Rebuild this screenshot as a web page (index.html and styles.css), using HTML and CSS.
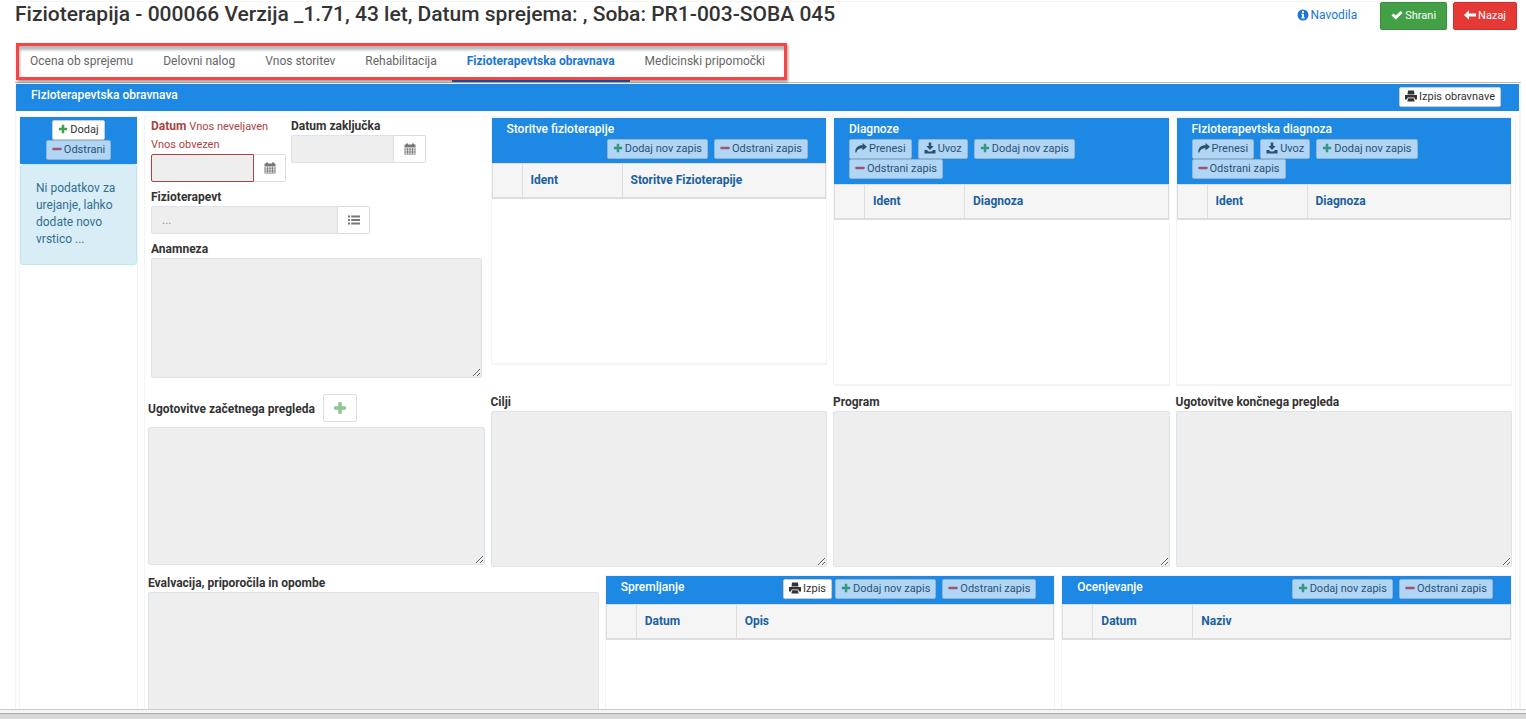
FILE: index.html
```html
<!DOCTYPE html>
<html lang="sl">
<head>
  <meta charset="utf-8">
  <title>Fizioterapija</title>
  <link rel="stylesheet" href="styles.css">
</head>
<body>

    <!-- icons -->
    <svg class="sprite" aria-hidden="true">
        <symbol id="plus" viewBox="0 0 12 12"><path d="M4.5 1h3v3.500h3.500v3H7.500V11h-3V7.500H1v-3h3.500z"/></symbol>
        <symbol id="minus" viewBox="0 0 12 12"><rect x="0.500" y="4.500" width="11" height="3" rx="0.500"/></symbol>
        <symbol id="share" viewBox="0 0 12 12"><path d="M7.500 1L12 4.800 7.500 8.600V6.300C4.500 6.200 2.200 7.200 1.300 10.500L0.300 10.500C0 6 2.800 3.300 7.500 3.300z"/></symbol>
        <symbol id="download" viewBox="0 0 12 12"><path d="M4.700 0.500h2.600v3.500h2.400L6 8 2.300 4h2.400zM0.500 8h2.500l1.500 1.500h3L9 8h2.500v3.500h-11z"/></symbol>
        <symbol id="print" viewBox="0 0 12 12"><path d="M3 0.500h6l0.500 4h-7zM0 5h12v4.500h-2l-0.700-2H2.700L2 9.500H0zM3.300 8.200h5.400l1 3.300H2.300z"/></symbol>
        <symbol id="ok" viewBox="0 0 12 12"><path d="M0.500 6.500L2.500 4.500 4.800 6.500 9.700 2 11.600 3.900 4.800 10.500z"/></symbol>
        <symbol id="left" viewBox="0 0 12 12"><path d="M0 6L5 1.200V4.500h7v3H5v3.300z"/></symbol>
        <symbol id="info" viewBox="0 0 12 12"><path fill-rule="evenodd" d="M6 0.500a5.500 5.500 0 1 0 0 11a5.500 5.500 0 1 0 0-11zM5 2h2v1.800H5zM4.300 4.800H7v3.500h0.800v1.200H4.300V8.300H5V6H4.300z"/></symbol>
        <symbol id="calendar" viewBox="0 0 12 12"><path fill-rule="evenodd" d="M0.500 1.500H2V0.500h2v1h4v-1h2v1h1.500V4h-11zM0.500 4.500h11v7h-11zM1.300 5.200v1.300h1.700V5.200zM3.800 5.200v1.300h1.800V5.200zM6.400 5.200v1.300h1.800V5.200zM9 5.200v1.300h1.700V5.200zM1.300 7.300v1.300h1.700V7.300zM3.800 7.300v1.300h1.800V7.300zM6.400 7.300v1.300h1.800V7.300zM9 7.300v1.300h1.700V7.300zM1.300 9.400v1.300h1.700V9.400zM3.800 9.400v1.300h1.800V9.400zM6.400 9.400v1.300h1.800V9.400zM9 9.400v1.300h1.700V9.400z"/></symbol>
        <symbol id="list" viewBox="0 0 12 12"><path d="M0 1.500h2v2H0zM3.200 1.500H12v2H3.200zM0 5h2v2H0zM3.200 5H12v2H3.200zM0 8.500h2v2H0zM3.200 8.500H12v2H3.200z"/></symbol>
    </svg>

    <div class="page">
        <header class="page-header">
            <h1>Fizioterapija - 000066 Verzija _1.71, 43 let, Datum sprejema: , Soba: PR1-003-SOBA 045</h1>
            <div class="actions">
                <a href="#" class="help"><svg class="icon wide"><use href="#info"/></svg>Navodila</a>
                <button class="btn btn-save"><svg class="icon wide"><use href="#ok"/></svg>Shrani</button>
                <button class="btn btn-back"><svg class="icon wide"><use href="#left"/></svg>Nazaj</button>
            </div>
        </header>

        <nav class="tabs">
            <div class="tab-group">
                <a href="#">Ocena ob sprejemu</a>
                <a href="#">Delovni nalog</a>
                <a href="#">Vnos storitev</a>
                <a href="#">Rehabilitacija</a>
                <a href="#" class="active">Fizioterapevtska obravnava</a>
                <a href="#">Medicinski pripomočki</a>
                <div class="highlight"></div>
            </div>
        </nav>

        <section class="treatment">
            <div class="bar">
                <h2>Fizioterapevtska obravnava</h2>
                <button class="btn"><svg class="icon wide"><use href="#print"/></svg>Izpis obravnave</button>
            </div>

            <div class="columns">
                <aside class="side">
                    <div class="side-head">
                        <button class="btn"><svg class="icon green"><use href="#plus"/></svg>Dodaj</button>
                        <button class="btn" disabled><svg class="icon red"><use href="#minus"/></svg>Odstrani</button>
                    </div>
                    <p class="alert">Ni podatkov za urejanje, lahko dodate novo vrstico ...</p>
                </aside>

                <div class="main">
                    <div class="row four">
                        <div class="fields">
                            <div class="dates">
                                <div class="field error">
                                    <label for="datum"><b>Datum</b> Vnos neveljaven<br>Vnos obvezen</label>
                                    <div class="group date">
                                        <input type="text" id="datum" disabled>
                                        <button class="addon" aria-label="Datum"><svg class="icon"><use href="#calendar"/></svg></button>
                                    </div>
                                </div>
                                <div class="field">
                                    <label for="konec">Datum zaključka</label>
                                    <div class="group date">
                                        <input type="text" id="konec" disabled>
                                        <button class="addon" aria-label="Datum zaključka"><svg class="icon"><use href="#calendar"/></svg></button>
                                    </div>
                                </div>
                            </div>
                            <div class="field">
                                <label for="terapevt">Fizioterapevt</label>
                                <div class="group lookup">
                                    <input type="text" id="terapevt" placeholder="..." disabled>
                                    <button class="addon" aria-label="Seznam"><svg class="icon"><use href="#list"/></svg></button>
                                </div>
                            </div>
                            <div class="field">
                                <label for="anamneza">Anamneza</label>
                                <textarea id="anamneza" class="short" disabled></textarea>
                            </div>
                        </div>

                        <section class="panel services">
                            <div class="panel-head">
                                <h3>Storitve fizioterapije</h3>
                                <div class="tools right">
                                    <button class="btn" disabled><svg class="icon green"><use href="#plus"/></svg>Dodaj nov zapis</button>
                                    <button class="btn" disabled><svg class="icon red"><use href="#minus"/></svg>Odstrani zapis</button>
                                </div>
                            </div>
                            <table>
                                <thead><tr><td class="mark"></td><th class="key">Ident</th><th>Storitve Fizioterapije</th></tr></thead>
                            </table>
                        </section>

                        <section class="panel">
                            <div class="panel-head">
                                <h3>Diagnoze</h3>
                                <div class="tools">
                                    <button class="btn" disabled><svg class="icon wide"><use href="#share"/></svg>Prenesi</button>
                                    <button class="btn" disabled><svg class="icon wide"><use href="#download"/></svg>Uvoz</button>
                                    <button class="btn" disabled><svg class="icon green"><use href="#plus"/></svg>Dodaj nov zapis</button>
                                    <button class="btn" disabled><svg class="icon red"><use href="#minus"/></svg>Odstrani zapis</button>
                                </div>
                            </div>
                            <table>
                                <thead><tr><td class="mark"></td><th class="key">Ident</th><th>Diagnoza</th></tr></thead>
                            </table>
                        </section>

                        <section class="panel">
                            <div class="panel-head">
                                <h3>Fizioterapevtska diagnoza</h3>
                                <div class="tools">
                                    <button class="btn" disabled><svg class="icon wide"><use href="#share"/></svg>Prenesi</button>
                                    <button class="btn" disabled><svg class="icon wide"><use href="#download"/></svg>Uvoz</button>
                                    <button class="btn" disabled><svg class="icon green"><use href="#plus"/></svg>Dodaj nov zapis</button>
                                    <button class="btn" disabled><svg class="icon red"><use href="#minus"/></svg>Odstrani zapis</button>
                                </div>
                            </div>
                            <table>
                                <thead><tr><td class="mark"></td><th class="key">Ident</th><th>Diagnoza</th></tr></thead>
                            </table>
                        </section>
                    </div>

                    <div class="row four">
                        <div class="field">
                            <div class="label-line">
                                <label for="zacetek">Ugotovitve začetnega pregleda</label>
                                <button class="btn-add" aria-label="Dodaj" disabled><svg class="icon green"><use href="#plus"/></svg></button>
                            </div>
                            <textarea id="zacetek" class="medium" disabled></textarea>
                        </div>
                        <div class="field">
                            <label for="cilji">Cilji</label>
                            <textarea id="cilji" class="tall" disabled></textarea>
                        </div>
                        <div class="field">
                            <label for="program">Program</label>
                            <textarea id="program" class="tall" disabled></textarea>
                        </div>
                        <div class="field">
                            <label for="konecni">Ugotovitve končnega pregleda</label>
                            <textarea id="konecni" class="tall" disabled></textarea>
                        </div>
                    </div>

                    <div class="row three">
                        <div class="field">
                            <label for="evalvacija">Evalvacija, priporočila in opombe</label>
                            <textarea id="evalvacija" class="tall" disabled></textarea>
                        </div>

                        <section class="panel">
                            <div class="panel-head inline">
                                <h3>Spremljanje</h3>
                                <div class="tools right">
                                    <button class="btn print"><svg class="icon wide"><use href="#print"/></svg>Izpis</button>
                                    <button class="btn" disabled><svg class="icon green"><use href="#plus"/></svg>Dodaj nov zapis</button>
                                    <button class="btn" disabled><svg class="icon red"><use href="#minus"/></svg>Odstrani zapis</button>
                                </div>
                            </div>
                            <table>
                                <thead><tr><td class="mark"></td><th class="key">Datum</th><th>Opis</th></tr></thead>
                            </table>
                        </section>

                        <section class="panel">
                            <div class="panel-head inline">
                                <h3>Ocenjevanje</h3>
                                <div class="tools right">
                                    <button class="btn" disabled><svg class="icon green"><use href="#plus"/></svg>Dodaj nov zapis</button>
                                    <button class="btn" disabled><svg class="icon red"><use href="#minus"/></svg>Odstrani zapis</button>
                                </div>
                            </div>
                            <table>
                                <thead><tr><td class="mark"></td><th class="key">Datum</th><th>Naziv</th></tr></thead>
                            </table>
                        </section>
                    </div>
                </div>
            </div>
        </section>
    </div>

    <footer class="bottom"></footer>

</body>
</html>
```
FILE: styles.css
```css
* {
    box-sizing: border-box;
}

body {
    margin: 0;
    height: 100vh;
    display: flex;
    flex-direction: column;
    overflow: hidden;
    background: #fff;
    color: #333;
    font-family: Roboto, "Liberation Sans", sans-serif;
    font-size: 12px;
    line-height: 17px;
}

h1, h2, h3, p {
    margin: 0;
    font-weight: 500;
}

a {
    text-decoration: none;
}

button, input, textarea {
    font-family: inherit;
}

.sprite {
    display: none;
}

.icon {
    width: 10px;
    height: 10px;
    fill: currentColor;
    flex: none;
}

.icon.wide {
    width: 12px;
    height: 12px;
}

.green { color: #43a047; }
.red { color: #e53935; }

.page {
    flex: 1;
    min-height: 0;
    overflow: hidden;
    padding: 1px 5px 0 15px;
}

/* title and main buttons */
.page-header {
    display: flex;
    justify-content: space-between;
    height: 42px;
    padding-right: 4px;
    border-top: 1px solid #f4f4f4;
}

.page-header h1 {
    font-size: 21px;
    line-height: 24px;
}

.actions {
    display: flex;
    align-items: flex-start;
    gap: 6px;
}

.help {
    display: flex;
    align-items: center;
    gap: 2px;
    margin-right: 17px;
    line-height: 26px;
    color: #1976d2;
}

.btn {
    display: inline-flex;
    align-items: center;
    gap: 2px;
    height: 20px;
    padding: 0 5px 2px;
    border: 1px solid #ccc;
    border-radius: 2px;
    background: #fff;
    color: #333;
    font-size: 11px;
    white-space: nowrap;
}

.btn:disabled {
    opacity: 0.65;
}

.btn-save,
.btn-back {
    height: 28px;
    padding: 0 10px 2px;
    color: #fff;
}

.btn-save {
    background: #43a047;
    border-color: #388e3c;
}

.btn-back {
    background: #e53935;
    border-color: #d32f2f;
}

/* tabs */
.tabs {
    display: flex;
    margin-bottom: 1px;
    border-bottom: 1px solid #bbb;
}

.tab-group {
    position: relative;
    display: flex;
    padding-right: 7px;
}

.tabs a {
    padding: 9px 15px;
    line-height: 18px;
    border-bottom: 3px solid transparent;
    color: #666;
}

.tabs a.active {
    color: #1976d2;
    font-weight: 700;
    border-bottom-color: #1976d2;
}

.highlight {
    position: absolute;
    inset: 0 0 2px 1px;
    border: 3px solid #fa4444;
    box-shadow: 1px 2px 3px rgba(0, 0, 0, 0.4), inset 1px 4px 3px rgba(0, 0, 0, 0.28);
    pointer-events: none;
}

/* blue bar */
.treatment {
    border: solid #f4f4f4;
    border-width: 0 2px 0 1px;
}

.bar {
    display: flex;
    justify-content: space-between;
    height: 27px;
    padding: 3px 18px 0 15px;
    background: #1e88e5;
    color: #fff;
}

.bar h2 {
    font-size: 12px;
}

.columns {
    display: flex;
    gap: 6px;
    padding: 5px 3px 0;
}

.side {
    flex: none;
    width: 119px;
    border: 1px solid #f4f4f4;
    border-bottom: 0;
}

.side-head {
    display: flex;
    flex-direction: column;
    align-items: center;
    height: 47px;
    padding-top: 3px;
    background: #1e88e5;
}

.alert {
    padding: 15px 15px 16px;
    border: 1px solid #bce8f1;
    border-radius: 3px;
    background: #d9edf7;
    color: #31708f;
    font-weight: 400;
}

.main {
    flex: 1;
    min-width: 0;
    display: flex;
    flex-direction: column;
    gap: 7px;
    padding: 0 3px;
    border: 1px solid #f4f4f4;
    border-bottom: 0;
}

.row {
    display: grid;
    align-items: start;
    gap: 6px;
}

.four { grid-template-columns: repeat(4, 1fr); }
.three { grid-template-columns: repeat(3, 1fr); }

/* fields */
.fields {
    display: flex;
    flex-direction: column;
    gap: 6px;
    padding: 0 3px;
}

.dates {
    display: flex;
    align-items: flex-start;
    gap: 5px;
}

.field label {
    display: block;
    line-height: 18px;
    font-weight: 700;
}

.field.error label {
    color: #a94442;
    font-size: 11px;
    font-weight: 400;
}

.error b {
    font-size: 12px;
}

.group {
    display: flex;
}

.date { width: 135px; }
.lookup { width: 219px; }

.group input {
    flex: 1;
    min-width: 0;
    height: 28px;
    padding: 0 10px;
    border: 1px solid #dbe3ec;
    border-radius: 2px 0 0 2px;
    background: #eee;
    font-size: 12px;
}

.group input::placeholder {
    color: #999;
}

.group.date {
    height: 28px;
}

.error input {
    border-color: #a94442;
}

.addon {
    display: flex;
    align-items: center;
    justify-content: center;
    width: 32px;
    padding: 0;
    border: 1px solid #ddd;
    border-left: 0;
    border-radius: 0 2px 2px 0;
    background: #fff;
    color: #777;
}

.addon .icon {
    width: 12px;
    height: 12px;
}

textarea {
    display: block;
    width: 100%;
    border: 1px solid #dbe3ec;
    border-radius: 2px;
    background: #eee;
}

.short { height: 120px; }
.medium { height: 138px; }
.tall { height: 156px; }

.label-line {
    display: flex;
    align-items: center;
    gap: 8px;
    padding: 1px 0 5px;
}

.label-line label {
    padding-top: 2px;
}

.btn-add {
    display: flex;
    align-items: center;
    justify-content: center;
    width: 34px;
    height: 28px;
    padding: 0;
    border: 1px solid #ddd;
    border-radius: 2px;
    background: #fff;
}

.btn-add .icon {
    width: 14px;
    height: 14px;
    opacity: 0.6;
}

/* panels with tables */
.panel {
    min-height: 269px;
    border: 1px solid #f4f4f4;
    border-bottom-width: 2px;
}

.services {
    min-height: 248px;
}

.three .panel {
    margin-top: 1px;
}

.panel-head {
    padding: 3px 15px 5px;
    background: #1e88e5;
    color: #fff;
}

.panel-head h3 {
    font-size: 12px;
    margin-bottom: 1px;
}

.services .panel-head {
    padding-bottom: 4px;
}

.panel-head.inline {
    display: flex;
    justify-content: space-between;
}

.tools {
    display: flex;
    flex-wrap: wrap;
    column-gap: 6px;
    padding-right: 40px;
}

.tools.right {
    justify-content: flex-end;
    padding-right: 3px;
}

.tools .print {
    margin-right: -3px;
}

table {
    width: 100%;
    table-layout: fixed;
    border-collapse: collapse;
    background: #f5f5f5;
}

th, td {
    height: 34px;
    padding: 0 8px;
    border: 1px solid #ddd;
    border-bottom-width: 2px;
    color: #1a5f9e;
    text-align: left;
}

.mark { width: 30px; }
.key { width: 100px; }

/* window edge */
.bottom {
    flex: none;
    height: 10px;
    border-top: 1px solid #ccc;
    background: linear-gradient(#f4f4f4 3px, #aaa 3px, #aaa 4px, #d8d8d8 4px);
}
```
